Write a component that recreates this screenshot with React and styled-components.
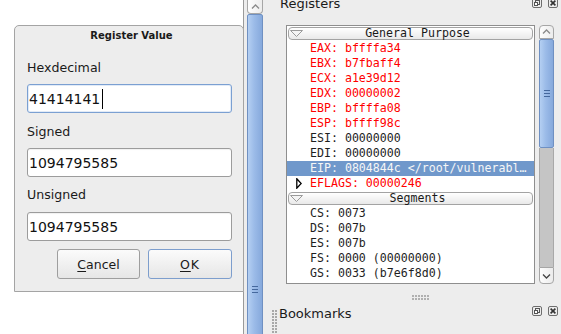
import React from 'react';
import styled, { createGlobalStyle } from 'styled-components';

const Global = createGlobalStyle`
  html, body { margin: 0; padding: 0; background: #ededed; }
  body { font-family: "DejaVu Sans", "Noto Sans", sans-serif; color: #1a1a1a; }
  * { box-sizing: border-box; }
`;

const Screen = styled.div`
  display: flex;
  width: 561px;
  height: 334px;
  overflow: hidden;
  background: #ededed;
`;

/* ---------- left: editor + dialog ---------- */
const EditorPane = styled.div`
  flex: none;
  width: 244px;
  height: 100%;
  background: #fff;
  border-right: 1px solid #9a9a9a;
  padding: 25px 0 0 14px;
`;

const Dialog = styled.div`
  width: 230px;
  height: 267px;
  background: #ededed;
  border: 1px solid #a4a4a4;
  border-radius: 5px 5px 0 0;
  padding: 4px 11px 0 12px;
  display: flex;
  flex-direction: column;
`;

const DialogTitle = styled.div`
  font-size: 10px;
  font-weight: bold;
  line-height: 12px;
  text-align: center;
  padding-left: 4px;
  color: #1a1a1a;
`;

const FieldLabel = styled.div`
  font-size: 12.6px;
  line-height: 15px;
  margin-top: ${p => p.$mt}px;
  color: #1a1a1a;
`;

const TextBox = styled.div`
  margin-top: ${p => p.$mt}px;
  height: 29px;
  width: 100%;
  background: #fff;
  border: 1px solid ${p => (p.$focused ? '#7ba0d2' : '#9c9c9c')};
  border-radius: 3px;
  padding-left: 1px;
  display: flex;
  align-items: center;
  font-size: 14px;
  color: #111;
  box-shadow: ${p => (p.$focused ? 'inset 0 0 0 1px rgba(140,175,225,0.25)' : 'inset 0 1px 1px rgba(0,0,0,0.06)')};
`;

const Caret = styled.span`
  display: inline-block;
  width: 1px;
  height: 20px;
  background: #000;
  margin-left: 2px;
`;

const ButtonRow = styled.div`
  margin-top: 8px;
  display: flex;
  justify-content: flex-end;
  gap: 8px;
`;

const PushButton = styled.div`
  width: ${p => p.$w}px;
  height: 30px;
  border: 1px solid ${p => (p.$default ? '#7d9ecd' : '#9e9e9e')};
  border-radius: 3px;
  background: linear-gradient(#fbfbfb, #e6e6e6);
  display: flex;
  align-items: center;
  justify-content: center;
  font-size: 12.5px;
  letter-spacing: ${p => (p.$default ? '1px' : '0')};
  color: #1a1a1a;
  u { text-underline-offset: 2px; }
`;

/* ---------- scrollbars ---------- */
const VScroll = styled.div`
  flex: none;
  width: ${p => p.$w}px;
  margin-left: ${p => p.$ml}px;
  display: flex;
  flex-direction: column;
  overflow: hidden;
`;

const ArrowButton = styled.div`
  flex: none;
  height: ${p => p.$h}px;
  border: 1px solid #a6a6a6;
  border-top-width: ${p => (p.$cutTop ? 0 : 1)}px;
  border-radius: ${p => (p.$down ? '0 0 4px 4px' : p.$cutTop ? '0 0 4px 4px' : '4px 4px 0 0')};
  background: linear-gradient(to right, #fdfdfd, #ececec);
  display: flex;
  align-items: center;
  justify-content: center;
`;

const Thumb = styled.div`
  flex: none;
  height: ${p => p.$h}px;
  border: 1px solid #6f90c2;
  border-radius: 2px;
  background: linear-gradient(to right, #b4cff2, #9bbbe8 45%, #86a9dc);
  display: flex;
  align-items: center;
  justify-content: center;
`;

const Trough = styled.div`
  flex: 1;
  background: #c5c5c5;
  border-left: 1px solid #a9a9a9;
  border-right: 1px solid #a9a9a9;
`;

const Grip = () => (
  <svg width="6" height="7" viewBox="0 0 6 7">
    <path d="M0 0.5h6M0 3.5h6M0 6.5h6" stroke="#45689d" strokeWidth="1" />
  </svg>
);

const Chevron = ({ down }) => (
  <svg width="9" height="6" viewBox="0 0 9 6">
    <polyline
      points={down ? '1,1.5 4.5,5 8,1.5' : '1,4.5 4.5,1 8,4.5'}
      fill="none"
      stroke={down ? '#444' : '#8a8a8a'}
      strokeWidth="1.3"
    />
  </svg>
);

/* ---------- right: dock ---------- */
const DockArea = styled.div`
  flex: 1;
  min-width: 0;
  display: flex;
  flex-direction: column;
`;

const DockTitleBar = styled.div`
  flex: none;
  height: 20px;
  margin-top: ${p => p.$mt || 0}px;
  display: flex;
  align-items: flex-start;
  padding-right: 3px;
`;

const DockTitle = styled.div`
  flex: 1;
  font-size: 13px;
  line-height: 20px;
  margin-left: ${p => p.$ml}px;
  color: #1a1a1a;
`;

const TitleIcons = styled.div`
  display: flex;
  gap: 6px;
  margin-top: ${p => p.$mt}px;
`;

const DragGrip = styled.div`
  flex: none;
  width: 5px;
  height: 30px;
  margin: 6px 0 0 9px;
  background-image: radial-gradient(circle at 1px 1px, #a8a8a8 0.8px, transparent 1px);
  background-size: 3px 3px;
`;

const FloatIcon = () => (
  <svg width="10" height="10" viewBox="0 0 10 10">
    <rect x="0.5" y="0.5" width="9" height="9" rx="1.5" fill="none" stroke="#6e6e6e" />
    <rect x="3.5" y="2.5" width="4" height="4" fill="none" stroke="#555" />
    <rect x="2.5" y="4.5" width="3" height="3" fill="#fff" stroke="#555" />
  </svg>
);

const CloseIcon = () => (
  <svg width="10" height="10" viewBox="0 0 10 10">
    <rect x="0.5" y="0.5" width="9" height="9" rx="1.5" fill="none" stroke="#6e6e6e" />
    <path d="M2.6 2.6L7.4 7.4M7.4 2.6L2.6 7.4" stroke="#333" strokeWidth="1.6" />
  </svg>
);

const TreeArea = styled.div`
  flex: none;
  display: flex;
  margin-top: 11px;
  height: 259px;
  padding-left: 23px;
`;

const TreeFrame = styled.div`
  flex: none;
  width: 249px;
  height: 100%;
  background: #fff;
  border: 1px solid #8e8e8e;
  overflow: hidden;
  font-family: "DejaVu Sans Mono", "Liberation Mono", monospace;
  font-size: 11.6px;
`;

const GroupHeader = styled.div`
  height: 13px;
  margin: 1px 1px 1px 1px;
  border: 1px solid #a3a3a3;
  border-radius: 4px;
  background: linear-gradient(#ffffff, #e9e9e9);
  display: flex;
  align-items: center;
  line-height: 11px;
  color: #1a1a1a;
  position: relative;
`;

const HeaderArrow = styled.svg`
  flex: none;
  margin-left: 1px;
`;

const HeaderText = styled.div`
  flex: 1;
  text-align: center;
  white-space: pre;
`;

const RegRow = styled.div`
  height: 15px;
  line-height: 15px;
  display: flex;
  align-items: center;
  padding-left: 9px;
  white-space: pre;
  color: ${p => (p.$selected ? '#f6f6f6' : p.$changed ? '#ff0000' : '#1e1e1e')};
  background: ${p => (p.$selected ? '#7098cb' : 'transparent')};
`;

const Expander = styled.div`
  flex: none;
  width: 14px;
  height: 15px;
  display: flex;
  align-items: center;
`;

const SplitterZone = styled.div`
  flex: none;
  height: 20px;
  padding: 11px 7px 0 23px;
  display: flex;
  justify-content: center;
`;

const SplitterDots = styled.div`
  width: 17px;
  height: 5px;
  background-image: radial-gradient(circle at 1px 1px, #b0b0b0 0.8px, transparent 1px);
  background-size: 3px 3px;
`;

const regs = [
  { t: 'EAX: bffffa34', c: true },
  { t: 'EBX: b7fbaff4', c: true },
  { t: 'ECX: a1e39d12', c: true },
  { t: 'EDX: 00000002', c: true },
  { t: 'EBP: bffffa08', c: true },
  { t: 'ESP: bffff98c', c: true },
  { t: 'ESI: 00000000' },
  { t: 'EDI: 00000000' },
  { t: 'EIP: 0804844c </root/vulnerabl\u2026', s: true },
  { t: 'EFLAGS: 00000246', c: true, exp: true },
];

const segs = [
  'CS: 0073',
  'DS: 007b',
  'ES: 007b',
  'FS: 0000 (00000000)',
  'GS: 0033 (b7e6f8d0)',
  'SS: 007b',
];

const Group = ({ title }) => (
  <GroupHeader>
    <HeaderArrow width="13" height="7" viewBox="0 0 13 7">
      <polygon points="0.5,0.5 12.5,0.5 6.5,6.5" fill="#f4f4f4" stroke="#9a9a9a" />
    </HeaderArrow>
    <HeaderText>{title}</HeaderText>
  </GroupHeader>
);

const Row = ({ text, changed, selected, expandable }) => (
  <RegRow $changed={changed} $selected={selected}>
    <Expander>
      {expandable && (
        <svg width="6" height="11" viewBox="0 0 6 11">
          <polygon points="0.8,0.8 5.2,5.5 0.8,10.2" fill="#fff" stroke="#000" strokeWidth="1.3" />
        </svg>
      )}
    </Expander>
    {text}
  </RegRow>
);

export default function App() {
  return (
    <>
      <Global />
      <Screen>
        <EditorPane>
          <Dialog>
            <DialogTitle>Register Value</DialogTitle>
            <FieldLabel $mt={18}>Hexdecimal</FieldLabel>
            <TextBox $mt={9} $focused>
              41414141
              <Caret />
            </TextBox>
            <FieldLabel $mt={11}>Signed</FieldLabel>
            <TextBox $mt={9}>1094795585</TextBox>
            <FieldLabel $mt={10}>Unsigned</FieldLabel>
            <TextBox $mt={10}>1094795585</TextBox>
            <ButtonRow>
              <PushButton $w={83}>
                <span><u>C</u>ancel</span>
              </PushButton>
              <PushButton $w={84} $default>
                <span><u>O</u>K</span>
              </PushButton>
            </ButtonRow>
          </Dialog>
        </EditorPane>

        <VScroll $w={16} $ml={3}>
          <ArrowButton $h={14} $cutTop>
            <Chevron />
          </ArrowButton>
          <Thumb $h={550}>
            <Grip />
          </Thumb>
        </VScroll>

        <DockArea>
          <DockTitleBar $mt={-6}>
            <DockTitle $ml={17}>Registers</DockTitle>
            <TitleIcons $mt={4}>
              <FloatIcon />
              <CloseIcon />
            </TitleIcons>
          </DockTitleBar>

          <TreeArea>
            <TreeFrame>
              <Group title="General Purpose" />
              {regs.map(r => (
                <Row key={r.t} text={r.t} changed={r.c} selected={r.s} expandable={r.exp} />
              ))}
              <Group title="Segments" />
              {segs.map(s => (
                <Row key={s} text={s} />
              ))}
            </TreeFrame>
            <VScroll $w={15} $ml={4}>
              <ArrowButton $h={14}>
                <Chevron />
              </ArrowButton>
              <Thumb $h={109}>
                <Grip />
              </Thumb>
              <Trough />
              <ArrowButton $h={17} $down>
                <Chevron down />
              </ArrowButton>
            </VScroll>
          </TreeArea>

          <SplitterZone>
            <SplitterDots />
          </SplitterZone>

          <DockTitleBar>
            <DragGrip />
            <DockTitle $ml={2}>Bookmarks</DockTitle>
            <TitleIcons $mt={2}>
              <FloatIcon />
              <CloseIcon />
            </TitleIcons>
          </DockTitleBar>
        </DockArea>
      </Screen>
    </>
  );
}
